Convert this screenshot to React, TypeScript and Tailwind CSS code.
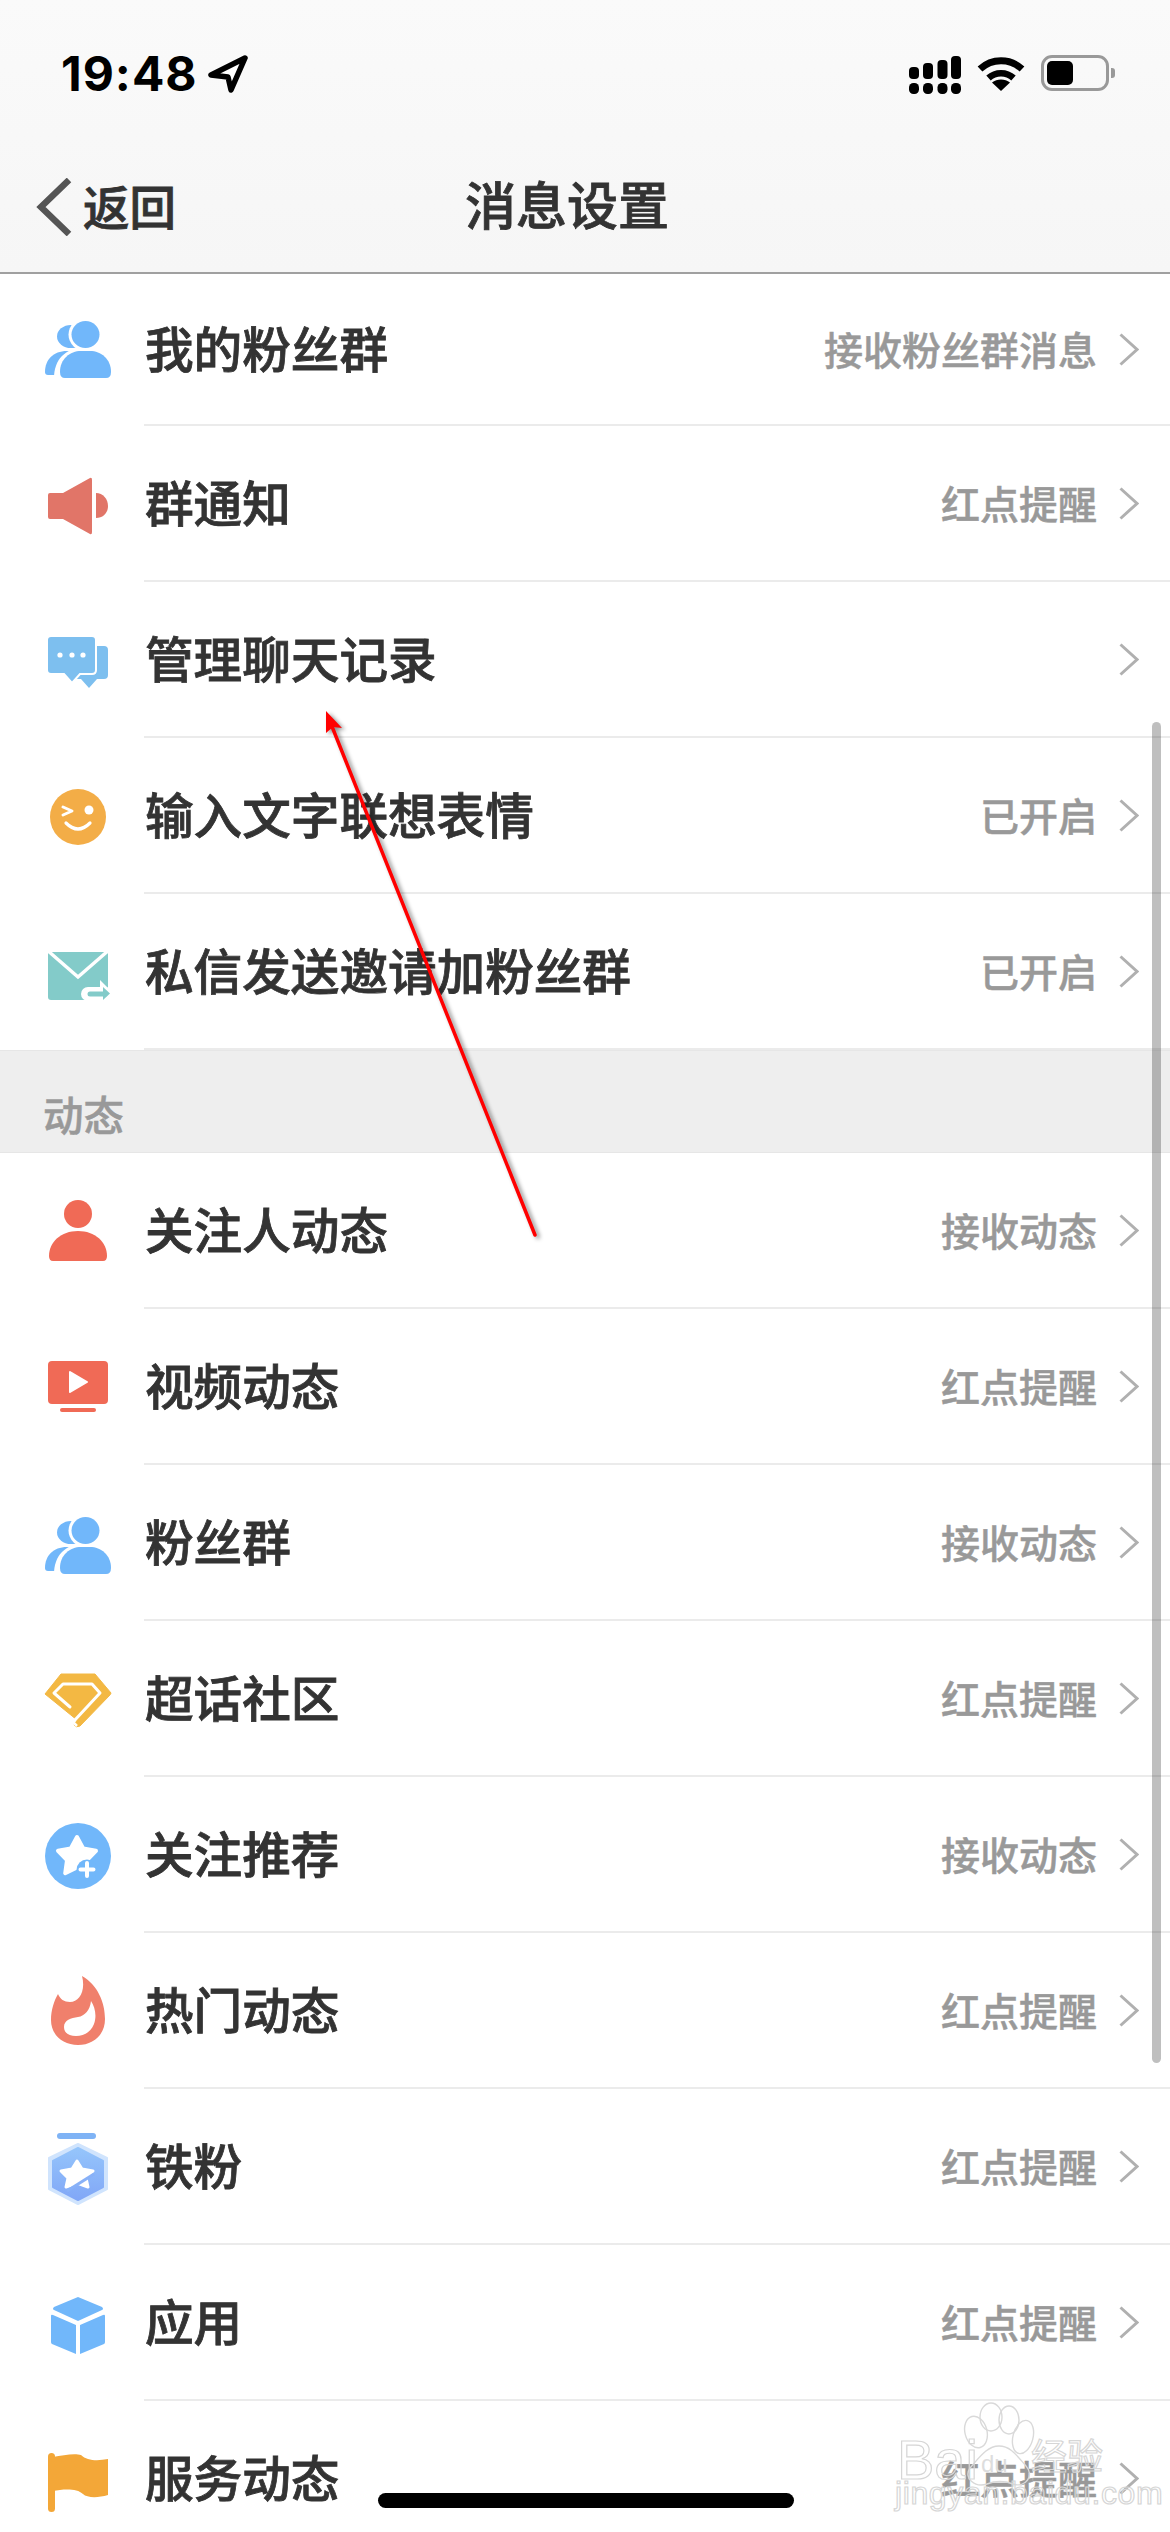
import type { ReactNode } from 'react';

const BLUE = '#71b7fa';
const RED = '#f06a56';

function Icon({ children }: { children: ReactNode }) {
  return (
    <svg width="70" height="70" viewBox="0 0 70 70" fill="none" className="ml-[43px] shrink-0 overflow-visible">
      {children}
    </svg>
  );
}

const GroupIcon = () => (
  <Icon>
    <ellipse cx="28" cy="24.5" rx="14" ry="11.5" fill={BLUE} />
    <path d="M2 60C2 48 10 39 24 39H30V63H5Q2 63 2 60Z" fill={BLUE} />
    <ellipse cx="42.5" cy="22.5" rx="17" ry="16.5" fill="#fff" />
    <path d="M11 66C11 48 22 36 40 36H46C60 36 71 48 71 66Z" fill="#fff" />
    <ellipse cx="42.5" cy="22.5" rx="14" ry="13.5" fill={BLUE} />
    <path d="M17 60C17 47 27 39 38 39H47C58 39 68 47 68 60Q68 66 63 66H22Q17 66 17 60Z" fill={BLUE} />
  </Icon>
);

const SpeakerIcon = () => (
  <Icon>
    <path d="M7 24H20L47 9Q49 8 49 11V63Q49 66 47 65L20 50H7Q5 50 5 48V26Q5 24 7 24Z" fill="#e17568" />
    <path d="M53 24C60 24 65 30 65 37C65 44 60 49 53 49Z" fill="#e17568" />
  </Icon>
);

const ChatIcon = () => (
  <Icon>
    <path d="M40 21H61Q65 21 65 25V50Q65 54 61 54H54L46 63L38 54H30V25Z" fill="#7dbfef" />
    <path d="M8 11H49Q53 11 53 15V45Q53 49 49 49H37L29 58L21 49H8Q4 49 4 45V15Q4 11 8 11Z" fill="#7dbfef" stroke="#fff" strokeWidth="2" />
    <circle cx="17" cy="30" r="2.6" fill="#fff" />
    <circle cx="29" cy="30" r="2.6" fill="#fff" />
    <circle cx="40" cy="30" r="2.6" fill="#fff" />
  </Icon>
);

const SmileIcon = () => (
  <Icon>
    <circle cx="35" cy="36" r="28" fill="#f3ad47" />
    <path d="M20 26L29 30L20 34" stroke="#fff" strokeWidth="3" strokeLinecap="round" strokeLinejoin="round" />
    <circle cx="46" cy="29" r="4.5" fill="#fff" />
    <path d="M23 42Q35 54 47 42" stroke="#fff" strokeWidth="3.2" strokeLinecap="round" />
  </Icon>
);

const MailIcon = () => (
  <Icon>
    <path d="M5 15H65V60Q65 63 62 63H8Q5 63 5 60Z" fill="#83cbc9" />
    <path d="M4 13L35 40L66 13" stroke="#fff" strokeWidth="3.5" />
    <path d="M45 57H62" stroke="#fff" strokeWidth="14" strokeLinecap="round" />
    <path d="M57 43L70 56L57 66Z" fill="#fff" />
    <path d="M47 57H62" stroke="#83cbc9" strokeWidth="5" strokeLinecap="round" />
    <path d="M60 50L67 56.5L60 63Z" fill="#83cbc9" />
  </Icon>
);

const PersonIcon = () => (
  <Icon>
    <ellipse cx="35" cy="18" rx="14" ry="14" fill={RED} />
    <path d="M6 60C6 46 18 35 35 35C52 35 64 46 64 60Q64 65 60 65H10Q6 65 6 60Z" fill={RED} />
  </Icon>
);

const VideoIcon = () => (
  <Icon>
    <rect x="5" y="9" width="60" height="43" rx="4" fill={RED} />
    <path d="M27 20L44 30L27 40Z" fill="#fff" stroke="#fff" strokeWidth="2" strokeLinejoin="round" />
    <rect x="17" y="56" width="36" height="4" rx="2" fill={RED} />
  </Icon>
);

const DiamondIcon = () => (
  <Icon>
    <path d="M18 10H52L68 29Q68 30 66 32L37 62Q33 64 31 61L34 56L2 30Z" fill="#f3b843" stroke="#f3b843" strokeWidth="1" strokeLinejoin="round" />
    <path d="M27 43L11 29L20 20H49L57 29L31 57" stroke="#fff" strokeWidth="3" strokeLinecap="round" strokeLinejoin="round" />
    <path d="M30 58L34 62" stroke="#fff" strokeWidth="2.5" />
  </Icon>
);

const STAR = 'M34 17L40.2 28.5L53 30.8L44 40.2L45.8 53.2L34 47.5L22.2 53.2L24 40.2L15 30.8L27.8 28.5Z';

const StarIcon = () => (
  <Icon>
    <circle cx="35" cy="36" r="33" fill={BLUE} />
    <path d={STAR} fill="#fff" stroke="#fff" strokeWidth="4" strokeLinejoin="round" />
    <circle cx="44" cy="50" r="10.5" fill={BLUE} />
    <path d="M44 43V56M37.5 49.5H50.5" stroke="#fff" strokeWidth="4" strokeLinecap="round" />
  </Icon>
);

const FlameIcon = () => (
  <Icon>
    <path
      d="M39 0C55 9 62 27 62 43C62 59 50 69 35 69C20 69 8 59 8 44C8 34 11 25 15 18C17 23 21 26 27 26C36 26 43 15 39 0Z"
      fill="#f0806c"
    />
    <path
      d="M21 51C21 44 28 42 35 41C42 40 47 34 48 25C52 31 54 40 51 48C48 56 41 60 33 60C26 60 21 57 21 51Z"
      fill="#fff"
    />
  </Icon>
);

const BadgeIcon = () => (
  <Icon>
    <defs>
      <linearGradient id="badge" x1="0" y1="0" x2="0" y2="1">
        <stop offset="0" stopColor="#95c5fb" />
        <stop offset="1" stopColor="#81a7f7" />
      </linearGradient>
    </defs>
    <rect x="14" y="1" width="39" height="6" rx="3" fill="#7fb3f5" />
    <path d="M35 12L64 26V57L35 72L6 57V26Z" fill="#d0e4fd" stroke="#d0e4fd" strokeWidth="2" strokeLinejoin="round" />
    <path d="M35 16L60 29V55L35 68L10 55V29Z" fill="url(#badge)" stroke="url(#badge)" strokeWidth="2" strokeLinejoin="round" />
    <path d="M34 29L39 37L50 39L43 46L45 55L34 51L23 55L25 46L18 39L29 37Z" fill="#fff" stroke="#fff" strokeWidth="3" strokeLinejoin="round" />
    <path d="M24 59L51 42" stroke="#88b1f8" strokeWidth="3" />
  </Icon>
);

const CubeIcon = () => (
  <Icon>
    <path d="M35 9L59 19Q61 21 59 22L35 33L11 22Q9 21 11 19Z" fill={BLUE} />
    <path d="M8 28Q8 26 10 27L33 37V66L9 56Q8 55.5 8 54Z" fill={BLUE} />
    <path d="M62 28Q62 26 60 27L37 37V66L61 56Q62 55.5 62 54Z" fill={BLUE} />
  </Icon>
);

const FlagIcon = () => (
  <Icon>
    <rect x="5" y="9" width="7" height="59" rx="3.5" fill="#f3a738" />
    <path d="M10 13C20 11 32 9 38 11C44 17 55 17 65 15V51C55 54 44 54 40 50C34 44 20 45 10 47Z" fill="#f3a738" />
  </Icon>
);

const Chevron = () => (
  <svg width="20" height="33" viewBox="0 0 20 33" fill="none" className="shrink-0">
    <path d="M1.5 1.5L18 16.5L1.5 31.5" stroke="#b0b0b0" strokeWidth="3" />
  </svg>
);

function Row({
  icon,
  title,
  value,
  className = 'h-[156px]',
  iconClassName = '',
}: {
  icon: ReactNode;
  title: string;
  value?: string;
  className?: string;
  iconClassName?: string;
}) {
  return (
    <div className={`flex items-stretch ${className}`}>
      <div className={`flex w-[144px] shrink-0 items-center ${iconClassName}`}>{icon}</div>
      <div className="flex flex-1 items-center justify-between border-b-[2px] border-[#ebebeb] pr-[31px] pl-[1px]">
        <span className="mb-[3px] text-[48.6px] leading-none font-medium text-[#333333] [-webkit-text-stroke:0.8px_#333333]">{title}</span>
        <div className="flex items-center gap-[22px]">
          {value && <span className="mb-[1px] text-[39px] leading-none font-medium text-[#999999] [-webkit-text-stroke:0.5px_#999999]">{value}</span>}
          <Chevron />
        </div>
      </div>
    </div>
  );
}

function StatusBar() {
  return (
    <div className="flex h-[148px] items-start justify-between pt-[55px] pr-[55px] pl-[61px]">
      <div className="flex items-center gap-[10px]">
        <span className="font-['Inter'] text-[48px] leading-[38px] font-bold tracking-[1px] text-black">19:48</span>
        <svg width="40" height="38" viewBox="0 0 40 38" fill="none">
          <path d="M37 3L3 20L20 22L23 35Z" fill="#fff" stroke="#000" strokeWidth="5.5" strokeLinejoin="round" />
        </svg>
      </div>
      <div className="flex items-start gap-[16px]">
        <svg width="52" height="38" viewBox="0 0 52 38" fill="#000" className="mt-[1px]">
          <rect x="0" y="11" width="10" height="12" rx="4" />
          <rect x="14" y="7" width="10" height="16" rx="4" />
          <rect x="28.5" y="4" width="10" height="19" rx="4" />
          <rect x="42" y="0" width="10" height="23" rx="4" />
          <rect x="0" y="27" width="10" height="11" rx="4.5" />
          <rect x="14" y="27" width="10" height="11" rx="4.5" />
          <rect x="28.5" y="27" width="10" height="11" rx="4.5" />
          <rect x="42" y="27" width="10" height="11" rx="4.5" />
        </svg>
        <svg width="48" height="36" viewBox="0 0 48 36" fill="none">
          <path d="M3 14C15 3 33 3 45 14" stroke="#000" strokeWidth="7" />
          <path d="M11.5 23C18.5 16.5 29.5 16.5 36.5 23" stroke="#000" strokeWidth="6.5" />
          <path d="M24 36L15 27.5C20 23.5 28 23.5 33 27.5Z" fill="#000" />
        </svg>
        <div className="flex items-center gap-[2px]">
          <div className="flex h-[36px] w-[68px] items-center rounded-[11px] border-[3px] border-[#999999] pl-[3px]">
            <div className="h-[24px] w-[26px] rounded-[5px] bg-black" />
          </div>
          <div className="h-[10px] w-[4px] rounded-r-[3px] bg-[#999999]" />
        </div>
      </div>
    </div>
  );
}

function Header() {
  return (
    <div className="h-[274px] border-b-[2px] border-[#a0a0a0] bg-gradient-to-b from-[#fafafa] to-[#f6f6f6]">
      <StatusBar />
      <div className="relative flex h-[118px] items-center justify-center pr-[36px]">
        <div className="absolute top-[30px] left-[36px] flex items-center gap-[11px]">
          <svg width="36" height="58" viewBox="0 0 36 58" fill="none">
            <path d="M33 2L5 29L33 56" stroke="#555555" strokeWidth="6.5" />
          </svg>
          <span className="mb-[4px] text-[46.5px] leading-none font-medium text-[#333333] [-webkit-text-stroke:0.8px_#333333]">返回</span>
        </div>
        <span className="mb-[8px] text-[51px] leading-none font-medium text-[#333333] [-webkit-text-stroke:0.8px_#333333]">消息设置</span>
      </div>
    </div>
  );
}

function Watermark() {
  const outline = '[-webkit-text-stroke:1.2px_#d6d6d6] text-transparent';
  return (
    <div className="pointer-events-none absolute top-[2400px] left-[895px] h-[110px] w-[215px] font-['Liberation_Sans',sans-serif]">
      <svg width="215" height="110" viewBox="0 0 215 110" fill="none" stroke="#d9d9d9" strokeWidth="1.4" className="absolute top-0 left-0">
        <ellipse cx="81" cy="32" rx="11" ry="16" transform="rotate(-15 81 32)" />
        <ellipse cx="96" cy="17" rx="11" ry="14" />
        <ellipse cx="114" cy="20" rx="10" ry="14" />
        <ellipse cx="128" cy="37" rx="10" ry="17" transform="rotate(15 128 37)" />
        <path d="M75 68C84 58 92 46 104 46C116 46 122 56 131 66C140 76 130 88 118 84C110 81 100 81 92 84C80 88 68 78 75 68Z" />
      </svg>
      <span className={`absolute top-[32px] left-[2px] text-[56px] leading-none ${outline}`}>Bai</span>
      <span className="absolute top-[52px] left-[86px] text-[24px] leading-none text-[#dddddd]">du</span>
      <span className={`absolute top-[36px] left-[136px] font-['Noto_Sans_CJK_SC'] text-[36px] leading-none ${outline}`}>经验</span>
      <span className={`absolute top-[77px] left-[0px] text-[32px] leading-none tracking-[0.6px] ${outline}`}>jingyan.baidu.com</span>
    </div>
  );
}

export default function App() {
  return (
    <div className="relative h-[2532px] w-[1170px] overflow-hidden bg-white font-['Noto_Sans_CJK_SC','Noto_Sans',sans-serif]">
      <Header />

      <Row icon={<GroupIcon />} title="我的粉丝群" value="接收粉丝群消息" className="h-[152px]" iconClassName="pb-[6px]" />
      <Row icon={<SpeakerIcon />} title="群通知" value="红点提醒" />
      <Row icon={<ChatIcon />} title="管理聊天记录" />
      <Row icon={<SmileIcon />} title="输入文字联想表情" value="已开启" />
      <Row icon={<MailIcon />} title="私信发送邀请加粉丝群" value="已开启" />

      <div className="h-[103px] border-y-[1px] border-[#e6e6e6] bg-[#eeeeee] pt-[43px] pl-[43px] text-[40.5px] leading-none font-medium text-[#999999] [-webkit-text-stroke:0.5px_#999999]">
        动态
      </div>

      <Row icon={<PersonIcon />} title="关注人动态" value="接收动态" />
      <Row icon={<VideoIcon />} title="视频动态" value="红点提醒" />
      <Row icon={<GroupIcon />} title="粉丝群" value="接收动态" />
      <Row icon={<DiamondIcon />} title="超话社区" value="红点提醒" />
      <Row icon={<StarIcon />} title="关注推荐" value="接收动态" />
      <Row icon={<FlameIcon />} title="热门动态" value="红点提醒" />
      <Row icon={<BadgeIcon />} title="铁粉" value="红点提醒" />
      <Row icon={<CubeIcon />} title="应用" value="红点提醒" />
      <Row icon={<FlagIcon />} title="服务动态" value="红点提醒" />

      {/* scroll indicator */}
      <div className="absolute top-[722px] left-[1152px] h-[1341px] w-[9px] rounded-full bg-black/25" />

      {/* home indicator */}
      <div className="absolute top-[2493px] left-[378px] h-[15px] w-[416px] rounded-full bg-black" />

      <Watermark />

      {/* red annotation arrow */}
      <svg
        width="1170"
        height="2532"
        viewBox="0 0 1170 2532"
        fill="none"
        className="pointer-events-none absolute top-0 left-0 drop-shadow-[3px_2px_2px_rgba(0,0,0,0.45)]"
      >
        <path d="M535 1235L331 724" stroke="#ff0000" strokeWidth="3.5" strokeLinecap="round" />
        <path d="M326 711L342 728L333 727L326 733Z" fill="#ff0000" />
      </svg>
    </div>
  );
}
